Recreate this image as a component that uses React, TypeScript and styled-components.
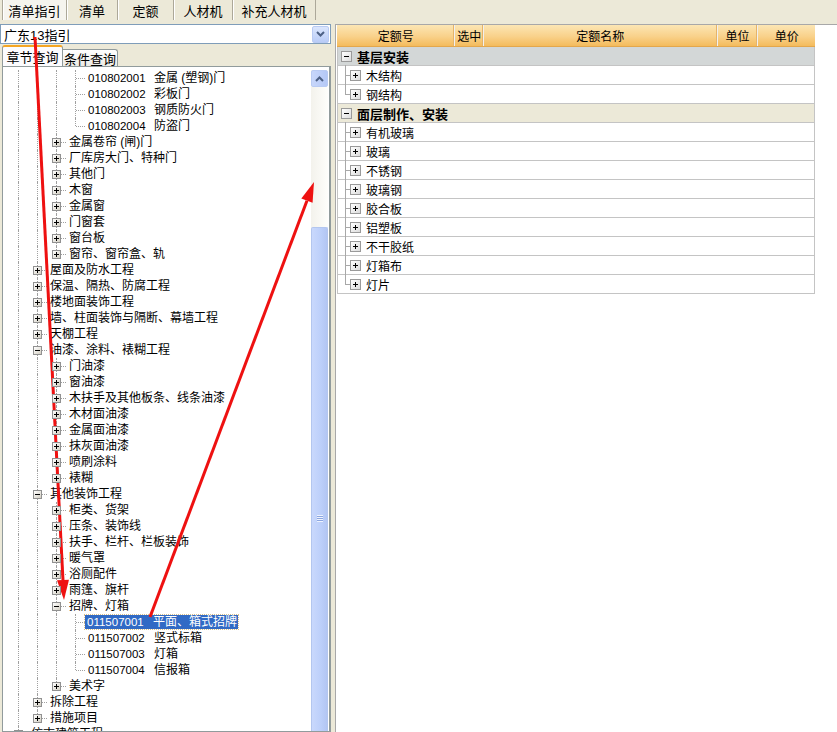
import React from 'react';
import styled, { createGlobalStyle, css } from 'styled-components';

const GlobalStyle = createGlobalStyle`
  html, body {
    margin: 0;
    padding: 0;
    background: #ece9d8;
  }
  body {
    font-family: "Liberation Sans", "Noto Sans CJK SC", sans-serif;
    font-size: 12px;
    color: #000;
  }
`;

const Page = styled.div`
  position: relative;
  width: 837px;
  height: 732px;
  overflow: hidden;
  display: flex;
  flex-direction: column;
  background: #ece9d8;
`;

const TopBar = styled.div`
  display: flex;
  height: 20px;
  padding-left: 2px;
  margin-bottom: 4px;
`;

const TopTab = styled.div<{ $w: number; $active?: boolean }>`
  width: ${(p) => p.$w}px;
  display: flex;
  align-items: center;
  justify-content: center;
  font-size: 13px;
  border-right: 1px solid #aca899;
  box-shadow: inset 1px 0 0 #fff;
  ${(p) =>
    p.$active &&
    css`
      background: #f5f4ee;
      border-left: 1px solid #aca899;
    `}
`;

const Main = styled.div`
  flex: 1;
  display: flex;
  min-height: 0;
`;

const LeftPane = styled.div`
  width: 331px;
  display: flex;
  flex-direction: column;
`;

const Combo = styled.div`
  height: 18px;
  border: 1px solid #7f9db9;
  background: #fff;
  display: flex;
  align-items: center;
  padding-left: 3px;
  font-size: 13px;
`;

const ComboText = styled.span`
  flex: 1;
`;

const ComboButton = styled.div`
  width: 15px;
  height: 15px;
  margin-right: 1px;
  border: 1px solid #b9cbf3;
  border-radius: 2px;
  background: linear-gradient(#dbe6fd, #b9ccf7);
  display: flex;
  align-items: center;
  justify-content: center;
`;

const QueryTabs = styled.div`
  height: 20px;
  margin-top: 2px;
  padding-left: 2px;
  display: flex;
  align-items: flex-end;
`;

const QueryTab = styled.div<{ $active?: boolean }>`
  display: flex;
  align-items: center;
  justify-content: center;
  font-size: 13px;
  border: 1px solid #919b9c;
  border-bottom: none;
  ${(p) =>
    p.$active
      ? css`
          width: 59px;
          height: 19px;
          background: #fcfcfe;
          border-top: 2px solid #f5a623;
          border-radius: 3px 3px 0 0;
        `
      : css`
          width: 54px;
          height: 16px;
          background: linear-gradient(#fff, #ecebe6);
          border-left: none;
          border-radius: 0 3px 0 0;
        `}
`;

const TreeBox = styled.div`
  flex: 1;
  min-height: 0;
  margin-left: 2px;
  width: 326px;
  border: 1px solid #919b9c;
  border-right: 2px solid #919b9c;
  box-shadow: inset -1px 0 0 #fff;
  background: #fff;
  display: flex;
  overflow: hidden;
`;

const TreeList = styled.div`
  flex: 1;
  padding: 3px 0 0 6px;
  overflow: hidden;
`;

const TreeRow = styled.div`
  height: 16px;
  display: flex;
  align-items: stretch;
  white-space: nowrap;
`;

const Guide = styled.div<{ $line: 'none' | 'full' | 'half' }>`
  position: relative;
  width: 19px;
  flex: none;
  ${(p) =>
    p.$line !== 'none' &&
    css`
      &::before {
        content: '';
        position: absolute;
        left: 9px;
        top: 0;
        height: ${p.$line === 'full' ? '16px' : '8px'};
        border-left: 1px dotted #a0a0a0;
      }
    `}
`;

const Connector = styled.div`
  position: absolute;
  left: 10px;
  top: 8px;
  width: 9px;
  border-top: 1px dotted #a0a0a0;
`;

const ExpandBox = styled.div<{ $open?: boolean }>`
  position: absolute;
  left: 5px;
  top: 4px;
  width: 7px;
  height: 7px;
  border: 1px solid #919191;
  background: linear-gradient(135deg, #fff, #d4d0c4);
  z-index: 1;
  &::before {
    content: '';
    position: absolute;
    left: 1px;
    top: 3px;
    width: 5px;
    height: 1px;
    background: #000;
  }
  ${(p) =>
    !p.$open &&
    css`
      &::after {
        content: '';
        position: absolute;
        left: 3px;
        top: 1px;
        width: 1px;
        height: 5px;
        background: #000;
      }
    `}
`;

const NodeLabel = styled.span<{ $selected?: boolean }>`
  margin-left: 2px;
  align-self: center;
  line-height: 14px;
  padding: 0 1px;
  font-size: 12px;
  display: inline-flex;
  ${(p) =>
    p.$selected &&
    css`
      margin-left: 0;
      padding: 0 1px 0 2px;
      background: #316ac5;
      color: #fff;
      outline: 1px dotted #d9c08a;
    `}
`;

const NodeCode = styled.span`
  width: 66px;
  font-size: 11.5px;
`;

const ScrollTrack = styled.div`
  width: 17px;
  flex: none;
  margin: 3px 1px 0 0;
  display: flex;
  flex-direction: column;
  background: linear-gradient(90deg, #f3f2ec, #fefefb);
`;

const ScrollButton = styled.div`
  height: 15px;
  border: 1px solid #b9cbf3;
  border-radius: 2px;
  background: linear-gradient(90deg, #c8d7fb, #b4c8f6);
  display: flex;
  align-items: center;
  justify-content: center;
`;

const ScrollThumb = styled.div`
  margin-top: 140px;
  flex: 1;
  border: 1px solid #b3c6ef;
  border-bottom: none;
  border-radius: 2px 2px 0 0;
  background: linear-gradient(90deg, #c9d8fc, #bccffa 60%, #b3c6f3);
  display: flex;
  justify-content: center;
  padding-top: 287px;
`;

const Grip = styled.div`
  width: 6px;
  height: 7px;
  background: repeating-linear-gradient(#eef3fe 0 1px, #8ca6e0 1px 2px);
`;

const Splitter = styled.div`
  width: 4px;
  flex: none;
`;

const RightPane = styled.div`
  flex: 1;
  background: #fff;
  border-top: 1px solid #a8a8a8;
  border-left: 1px solid #a8a8a8;
  padding-left: 1px;
`;

const Grid = styled.div`
  width: 478px;
`;

const HeaderRow = styled.div`
  display: flex;
  height: 21px;
  background: linear-gradient(#fce6b4, #f9d18a 55%, #f4bb5c);
  border-bottom: 1px solid #e3a74c;
`;

const HeaderCell = styled.div<{ $w: number }>`
  width: ${(p) => p.$w}px;
  display: flex;
  align-items: center;
  justify-content: center;
  font-size: 12px;
  border-right: 1px solid #f0f0f0;
  box-shadow: inset -1px 0 0 #e5b46a;
  &:last-child {
    border-right: none;
    box-shadow: none;
  }
`;

const GridRow = styled.div<{ $bg?: string }>`
  position: relative;
  height: 18px;
  display: flex;
  align-items: stretch;
  background: ${(p) => p.$bg || '#fff'};
  border-bottom: 1px solid #c4c4c4;
  border-left: 1px solid #c4c4c4;
  border-right: 1px solid #c4c4c4;
`;

const GroupText = styled.span`
  align-self: center;
  font-weight: bold;
  font-size: 13px;
  margin-left: 19px;
`;

const ItemText = styled.span`
  align-self: center;
  font-size: 12px;
  margin-left: 16px;
`;

const GridGuide = styled.div<{ $line: 'full' | 'half' }>`
  position: relative;
  width: 12px;
  flex: none;
  &::before {
    content: '';
    position: absolute;
    left: 7px;
    top: -1px;
    height: ${(p) => (p.$line === 'full' ? '19px' : '10px')};
    border-left: 1px solid #a8a8a8;
  }
  &::after {
    content: '';
    position: absolute;
    left: 7px;
    top: 9px;
    width: 6px;
    border-top: 1px solid #a8a8a8;
  }
`;

const GridBox = styled.div<{ $open?: boolean }>`
  position: absolute;
  left: ${(p) => (p.$open ? 3 : 12)}px;
  width: 9px;
  height: 9px;
  border: 1px solid #9a9a9a;
  background: linear-gradient(135deg, #fff, #dcdcdc);
  top: 4px;
  z-index: 1;
  &::before {
    content: '';
    position: absolute;
    left: 2px;
    top: 4px;
    width: 5px;
    height: 1px;
    background: #000;
  }
  ${(p) =>
    !p.$open &&
    css`
      &::after {
        content: '';
        position: absolute;
        left: 4px;
        top: 2px;
        width: 1px;
        height: 5px;
        background: #000;
      }
    `}
`;

const Overlay = styled.svg`
  position: absolute;
  left: 0;
  top: 0;
  pointer-events: none;
`;

type Kind = 'plus' | 'minus' | 'leaf';
type Node = { level: number; kind: Kind; label: string; code?: string; selected?: boolean };

const tree: Node[] = [
  { level: 3, kind: 'leaf', code: '010802001', label: '金属 (塑钢)门' },
  { level: 3, kind: 'leaf', code: '010802002', label: '彩板门' },
  { level: 3, kind: 'leaf', code: '010802003', label: '钢质防火门' },
  { level: 3, kind: 'leaf', code: '010802004', label: '防盗门' },
  { level: 2, kind: 'plus', label: '金属卷帘 (闸)门' },
  { level: 2, kind: 'plus', label: '厂库房大门、特种门' },
  { level: 2, kind: 'plus', label: '其他门' },
  { level: 2, kind: 'plus', label: '木窗' },
  { level: 2, kind: 'plus', label: '金属窗' },
  { level: 2, kind: 'plus', label: '门窗套' },
  { level: 2, kind: 'plus', label: '窗台板' },
  { level: 2, kind: 'plus', label: '窗帘、窗帘盒、轨' },
  { level: 1, kind: 'plus', label: '屋面及防水工程' },
  { level: 1, kind: 'plus', label: '保温、隔热、防腐工程' },
  { level: 1, kind: 'plus', label: '楼地面装饰工程' },
  { level: 1, kind: 'plus', label: '墙、柱面装饰与隔断、幕墙工程' },
  { level: 1, kind: 'plus', label: '天棚工程' },
  { level: 1, kind: 'minus', label: '油漆、涂料、裱糊工程' },
  { level: 2, kind: 'plus', label: '门油漆' },
  { level: 2, kind: 'plus', label: '窗油漆' },
  { level: 2, kind: 'plus', label: '木扶手及其他板条、线条油漆' },
  { level: 2, kind: 'plus', label: '木材面油漆' },
  { level: 2, kind: 'plus', label: '金属面油漆' },
  { level: 2, kind: 'plus', label: '抹灰面油漆' },
  { level: 2, kind: 'plus', label: '喷刷涂料' },
  { level: 2, kind: 'plus', label: '裱糊' },
  { level: 1, kind: 'minus', label: '其他装饰工程' },
  { level: 2, kind: 'plus', label: '柜类、货架' },
  { level: 2, kind: 'plus', label: '压条、装饰线' },
  { level: 2, kind: 'plus', label: '扶手、栏杆、栏板装饰' },
  { level: 2, kind: 'plus', label: '暖气罩' },
  { level: 2, kind: 'plus', label: '浴厕配件' },
  { level: 2, kind: 'plus', label: '雨篷、旗杆' },
  { level: 2, kind: 'minus', label: '招牌、灯箱' },
  { level: 3, kind: 'leaf', code: '011507001', label: '平面、箱式招牌', selected: true },
  { level: 3, kind: 'leaf', code: '011507002', label: '竖式标箱' },
  { level: 3, kind: 'leaf', code: '011507003', label: '灯箱' },
  { level: 3, kind: 'leaf', code: '011507004', label: '信报箱' },
  { level: 2, kind: 'plus', label: '美术字' },
  { level: 1, kind: 'plus', label: '拆除工程' },
  { level: 1, kind: 'plus', label: '措施项目' },
  { level: 0, kind: 'plus', label: '仿古建筑工程' },
];

// does a later row sit at `level` before the tree climbs above it?
const continuesAt = (i: number, level: number) => {
  for (let j = i + 1; j < tree.length; j++) {
    if (tree[j].level < level) return false;
    if (tree[j].level === level) return true;
  }
  return false;
};

const columns = [
  { title: '定额号', w: 118 },
  { title: '选中', w: 28 },
  { title: '定额名称', w: 234 },
  { title: '单位', w: 40 },
  { title: '单价', w: 57 },
];

const groups = [
  { name: '基层安装', bg: '#d3d7d7', items: ['木结构', '钢结构'] },
  {
    name: '面层制作、安装',
    bg: '#ece9d8',
    items: ['有机玻璃', '玻璃', '不锈钢', '玻璃钢', '胶合板', '铝塑板', '不干胶纸', '灯箱布', '灯片'],
  },
];

const topTabs = [
  { label: '清单指引', w: 63, active: true },
  { label: '清单', w: 50 },
  { label: '定额', w: 55 },
  { label: '人材机', w: 58 },
  { label: '补充人材机', w: 82 },
];

const Chevron = ({ up }: { up?: boolean }) => (
  <svg width="9" height="6" viewBox="0 0 9 6">
    <path
      d={up ? 'M1 5 L4.5 1.5 L8 5' : 'M1 1 L4.5 4.5 L8 1'}
      fill="none"
      stroke="#4d6185"
      strokeWidth="2"
    />
  </svg>
);

const Arrow = ({ x1, y1, x2, y2 }: { x1: number; y1: number; x2: number; y2: number }) => {
  const dx = x2 - x1;
  const dy = y2 - y1;
  const len = Math.hypot(dx, dy);
  const ux = dx / len;
  const uy = dy / len;
  const hl = 20;
  const hw = 6;
  const bx = x2 - ux * hl;
  const by = y2 - uy * hl;
  return (
    <g>
      <line x1={x1} y1={y1} x2={bx} y2={by} stroke="#ee1111" strokeWidth="3" />
      <polygon
        points={`${x2},${y2} ${bx - uy * hw},${by + ux * hw} ${bx + uy * hw},${by - ux * hw}`}
        fill="#ee1111"
      />
    </g>
  );
};

const App: React.FC = () => {
  return (
    <Page>
      <GlobalStyle />
      <TopBar>
        {topTabs.map((t) => (
          <TopTab key={t.label} $w={t.w} $active={t.active}>
            {t.label}
          </TopTab>
        ))}
      </TopBar>
      <Main>
        <LeftPane>
          <Combo>
            <ComboText>广东13指引</ComboText>
            <ComboButton>
              <Chevron />
            </ComboButton>
          </Combo>
          <QueryTabs>
            <QueryTab $active>章节查询</QueryTab>
            <QueryTab>条件查询</QueryTab>
          </QueryTabs>
          <TreeBox>
            <TreeList>
              {tree.map((n, i) => (
                <TreeRow key={i}>
                  {Array.from({ length: n.level }).map((_, a) => (
                    <Guide key={a} $line={continuesAt(i, a) ? 'full' : 'none'} />
                  ))}
                  <Guide $line={continuesAt(i, n.level) ? 'full' : 'half'}>
                    <Connector />
                    {n.kind !== 'leaf' && <ExpandBox $open={n.kind === 'minus'} />}
                  </Guide>
                  <NodeLabel $selected={n.selected}>
                    {n.code && <NodeCode>{n.code}</NodeCode>}
                    {n.label}
                  </NodeLabel>
                </TreeRow>
              ))}
            </TreeList>
            <ScrollTrack>
              <ScrollButton>
                <Chevron up />
              </ScrollButton>
              <ScrollThumb>
                <Grip />
              </ScrollThumb>
            </ScrollTrack>
          </TreeBox>
        </LeftPane>
        <Splitter />
        <RightPane>
          <Grid>
            <HeaderRow>
              {columns.map((c) => (
                <HeaderCell key={c.title} $w={c.w}>
                  {c.title}
                </HeaderCell>
              ))}
            </HeaderRow>
            {groups.map((g) => (
              <React.Fragment key={g.name}>
                <GridRow $bg={g.bg}>
                  <GridBox $open />
                  <GroupText>{g.name}</GroupText>
                </GridRow>
                {g.items.map((item, k) => (
                  <GridRow key={item}>
                    <GridGuide $line={k < g.items.length - 1 ? 'full' : 'half'} />
                    <GridBox />
                    <ItemText>{item}</ItemText>
                  </GridRow>
                ))}
              </React.Fragment>
            ))}
          </Grid>
        </RightPane>
      </Main>
      <Overlay width="837" height="732">
        <Arrow x1={35} y1={37} x2={64} y2={600} />
        <Arrow x1={150} y1={617} x2={314} y2={182} />
      </Overlay>
    </Page>
  );
};

export default App;
